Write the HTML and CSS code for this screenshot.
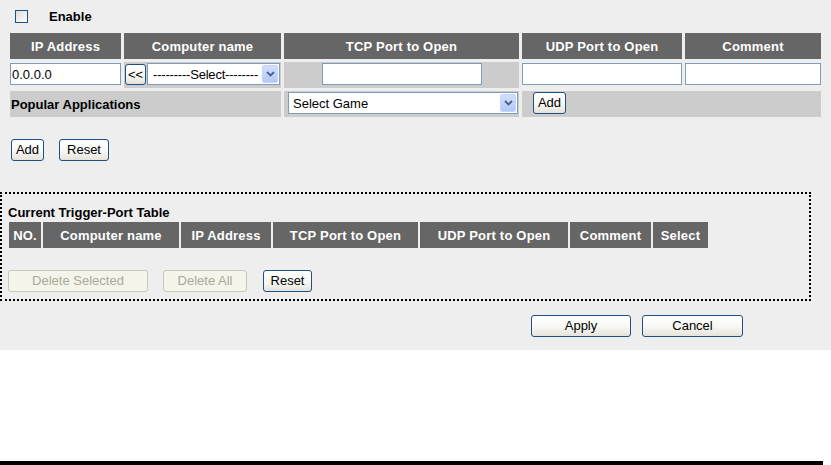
FILE: index.html
```html
<!DOCTYPE html>
<html>
<head>
<meta charset="utf-8">
<link rel="stylesheet" href="styles.css">
</head>
<body>
<div class="panel">
  <div class="enable-row">
    <span class="checkbox"></span>
    <span class="enable-label">Enable</span>
  </div>

  <table class="form-table">
    <colgroup>
      <col class="c-ip"><col class="c-name"><col class="c-tcp"><col class="c-udp"><col class="c-comment">
    </colgroup>
    <tr class="head">
      <th>IP Address</th><th>Computer name</th><th>TCP Port to Open</th><th>UDP Port to Open</th><th>Comment</th>
    </tr>
    <tr class="inputs">
      <td><input class="field" type="text" value="0.0.0.0"></td>
      <td class="grey">
        <div class="name-pick">
          <button class="btn pick">&lt;&lt;</button>
          <div class="select name-select">
            <span class="sel-text">---------Select--------</span>
            <span class="arrow"><svg width="9" height="6" viewBox="0 0 9 6"><path d="M1 1 L4.5 4.5 L8 1" fill="none" stroke="#4d6185" stroke-width="1.8"/></svg></span>
          </div>
        </div>
      </td>
      <td class="grey center"><input class="field tcp" type="text" value=""></td>
      <td><input class="field" type="text" value=""></td>
      <td><input class="field" type="text" value=""></td>
    </tr>
    <tr class="apps">
      <td colspan="2" class="grey label">Popular Applications</td>
      <td class="grey">
        <div class="select game-select">
          <span class="sel-text">Select Game</span>
          <span class="arrow"><svg width="9" height="6" viewBox="0 0 9 6"><path d="M1 1 L4.5 4.5 L8 1" fill="none" stroke="#4d6185" stroke-width="1.8"/></svg></span>
        </div>
      </td>
      <td colspan="2" class="grey add-cell"><button class="btn add">Add</button></td>
    </tr>
  </table>

  <div class="action-row">
    <button class="btn add">Add</button>
    <button class="btn reset">Reset</button>
  </div>

  <div class="trigger-box">
    <div class="box-title">Current Trigger-Port Table</div>
    <table class="trig-table">
      <colgroup>
        <col class="t-no"><col class="t-name"><col class="t-ip"><col class="t-tcp"><col class="t-udp"><col class="t-comment"><col class="t-select">
      </colgroup>
      <tr class="head">
        <th>NO.</th><th>Computer name</th><th>IP Address</th><th>TCP Port to Open</th><th>UDP Port to Open</th><th>Comment</th><th>Select</th>
      </tr>
    </table>
    <div class="box-buttons">
      <button class="btn disabled del-sel" disabled>Delete Selected</button>
      <button class="btn disabled del-all" disabled>Delete All</button>
      <button class="btn reset2">Reset</button>
    </div>
  </div>

  <div class="submit-row">
    <button class="btn apply">Apply</button>
    <button class="btn cancel">Cancel</button>
  </div>
</div>
<div class="rule"></div>
</body>
</html>
```

FILE: styles.css
```css
html, body {
  margin: 0;
  padding: 0;
  background: #ffffff;
}
body {
  width: 831px;
  font-family: "Liberation Sans", Arial, sans-serif;
  font-size: 13px;
  color: #000;
}
.panel {
  background: #eeeeee;
  height: 350px;
  box-sizing: border-box;
  padding-top: 10px;
}
.enable-row {
  display: flex;
  align-items: center;
  height: 13px;
  padding-left: 15px;
}
.checkbox {
  width: 13px;
  height: 13px;
  box-sizing: border-box;
  border: 1px solid #1c5180;
  background: linear-gradient(135deg, #dcdcd7, #ffffff);
}
.enable-label {
  margin-left: 21px;
  font-weight: bold;
  font-size: 13px;
  line-height: 13px;
}

/* tables */
table {
  border-collapse: separate;
  table-layout: fixed;
}
td, th {
  padding: 0;
}
.head th {
  background: #666666;
  color: #ffffff;
  font-weight: bold;
  font-size: 13px;
  height: 26px;
  text-align: center;
  vertical-align: middle;
  white-space: nowrap;
  letter-spacing: 0.2px;
}
.form-table {
  margin-top: 7px;
  margin-left: 7px;
  border-spacing: 3px;
  width: 817px;
}
.c-ip { width: 111px; }
.c-name { width: 157px; }
.c-tcp { width: 235px; }
.c-udp { width: 160px; }
.c-comment { width: 136px; }

.inputs td, .apps td {
  height: 26px;
  vertical-align: top;
  padding-top: 1px;
  box-sizing: border-box;
}
.grey {
  background: #cccccc;
}
.center {
  text-align: center;
}
.field {
  display: block;
  box-sizing: border-box;
  width: 100%;
  height: 22px;
  margin: 0;
  border: 1px solid #7f9db9;
  background: #ffffff;
  font-family: "Liberation Sans", Arial, sans-serif;
  font-size: 13px;
  padding: 0 1px;
  color: #000;
  outline: none;
}
.field.tcp {
  width: 160px;
  margin: 0 auto;
}
.name-pick {
  display: flex;
  align-items: flex-start;
  padding-left: 1px;
}
.select {
  display: flex;
  align-items: center;
  justify-content: space-between;
  box-sizing: border-box;
  height: 22px;
  border: 1px solid #7f9db9;
  background: #ffffff;
  padding: 1px;
}
.sel-text {
  white-space: nowrap;
  font-size: 13px;
  overflow: hidden;
  flex: 1 1 auto;
  min-width: 0;
}
.arrow {
  flex: 0 0 16px;
  width: 16px;
  height: 18px;
  box-sizing: border-box;
  border: 1px solid #c3d3fd;
  border-radius: 2px;
  background: linear-gradient(#d2defd, #b4c8f6);
  display: flex;
  align-items: center;
  justify-content: center;
}
.name-select {
  width: 133px;
  margin-left: 1px;
}
.name-select .sel-text {
  padding-left: 4px;
  letter-spacing: -0.2px;
}
.game-select {
  width: 230px;
  margin-left: 4px;
}
.game-select .sel-text {
  padding-left: 3px;
}
.apps .label {
  vertical-align: middle;
  padding-top: 0;
  padding-left: 1px;
  font-weight: bold;
  font-size: 13px;
}
.add-cell {
  padding-left: 11px;
}

/* buttons */
.btn {
  box-sizing: border-box;
  height: 22px;
  margin: 0;
  padding: 0;
  border: 1px solid #1f4f83;
  border-radius: 3px;
  background: linear-gradient(#ffffff 0%, #f7f7f3 55%, #e4e2da 100%);
  font-family: "Liberation Sans", Arial, sans-serif;
  font-size: 13px;
  color: #000;
  line-height: 20px;
  text-align: center;
}
.btn.pick {
  width: 21px;
  height: 21px;
  margin-top: 1px;
  line-height: 19px;
}
.btn.add { width: 33px; }
.btn.reset { width: 50px; }

.action-row {
  display: flex;
  gap: 15px;
  margin-top: 19px;
  padding-left: 11px;
}

.trigger-box {
  margin-top: 31px;
  width: 811px;
  height: 109px;
  box-sizing: border-box;
  border: 2px dotted #000;
  padding-top: 11px;
}
.box-title {
  font-weight: bold;
  font-size: 13px;
  line-height: 15px;
  padding-left: 6px;
}
.trig-table {
  margin-left: 5px;
  border-spacing: 2px;
  width: 703px;
}
.t-no { width: 32px; }
.t-name { width: 136px; }
.t-ip { width: 90px; }
.t-tcp { width: 145px; }
.t-udp { width: 148px; }
.t-comment { width: 81px; }
.t-select { width: 55px; }

.box-buttons {
  display: flex;
  margin-top: 20px;
  padding-left: 6px;
}
.btn.disabled {
  border-color: #c9c7ba;
  background: #f5f4ea;
  color: #aca899;
}
.del-sel { width: 140px; }
.del-all { width: 84px; margin-left: 15px; }
.reset2 { width: 49px; margin-left: 16px; }

.submit-row {
  display: flex;
  gap: 11px;
  margin-top: 14px;
  padding-left: 531px;
}
.apply { width: 100px; }
.cancel { width: 101px; }

.rule {
  margin-top: 111px;
  width: 823px;
  height: 4px;
  background: #000000;
}
```
